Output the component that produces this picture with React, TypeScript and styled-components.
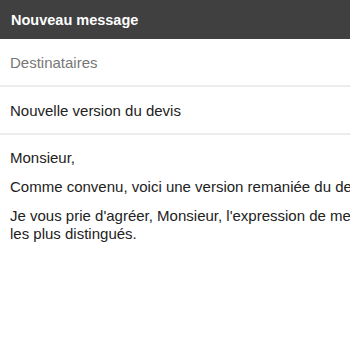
import { FC } from "react";
import styled, { createGlobalStyle } from "styled-components";

const GlobalStyle = createGlobalStyle`
  html, body {
    margin: 0;
    padding: 0;
    background: #ffffff;
    overflow: hidden;
  }
  body {
    font-family: "Liberation Sans", Arial, sans-serif;
  }
`;

const App: FC = () => {
  return (
    <>
      <GlobalStyle />
      <Window>
        <Header>Nouveau message</Header>
        <Field>
          <Placeholder>Destinataires</Placeholder>
        </Field>
        <Field>
          <Subject>Nouvelle version du devis</Subject>
        </Field>
        <Body>
          <Paragraph>Monsieur,</Paragraph>
          <Paragraph>Comme convenu, voici une version remaniée du devis.</Paragraph>
          <Paragraph>
            Je vous prie d'agréer, Monsieur, l'expression de mes sentiments
            les plus distingués.
          </Paragraph>
        </Body>
      </Window>
    </>
  );
};

export default App;

const Window = styled.div`
  width: 350px;
  height: 350px;
  overflow: hidden;
  background: #ffffff;
`;

const Header = styled.div`
  height: 39px;
  background: #404040;
  color: #ffffff;
  font-size: 14.5px;
  font-weight: bold;
  display: flex;
  align-items: center;
  padding: 0 11px;
  box-sizing: border-box;
`;

const Field = styled.div`
  height: 48px;
  display: flex;
  align-items: center;
  padding: 1px 10px 0;
  border-bottom: 2px solid #ececec;
  box-sizing: border-box;
  white-space: nowrap;
`;

const Placeholder = styled.span`
  font-size: 15px;
  color: #777777;
`;

const Subject = styled.span`
  font-size: 15px;
  color: #222222;
`;

const Body = styled.div`
  width: 450px;
  padding: 14px 10px 12px;
  box-sizing: border-box;
`;

const Paragraph = styled.p`
  margin: 0 0 11px;
  font-size: 15px;
  line-height: 18px;
  color: #222222;
`;
